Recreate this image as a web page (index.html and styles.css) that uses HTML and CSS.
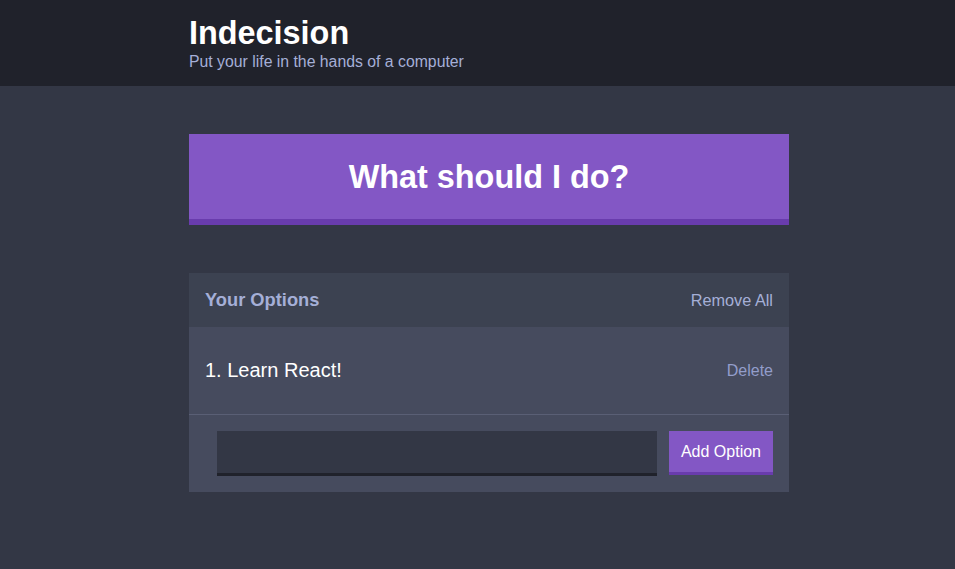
FILE: index.html
```html
<!DOCTYPE html>
<html lang="en">
<head>
<meta charset="utf-8">
<title>Indecision</title>
<link rel="stylesheet" href="styles.css">
</head>
<body>
<header class="header">
  <div class="container">
    <h1 class="header__title">Indecision</h1>
    <h2 class="header__subtitle">Put your life in the hands of a computer</h2>
  </div>
</header>
<main class="container main">
  <button class="big-button">What should I do?</button>
  <section class="widget">
    <div class="widget-header">
      <h3 class="widget-header__title">Your Options</h3>
      <button class="button--link">Remove All</button>
    </div>
    <div class="option">
      <p class="option__text">1. Learn React!</p>
      <button class="button--link option__delete">Delete</button>
    </div>
    <form class="add-option">
      <input class="add-option__input" type="text" name="option">
      <button class="button" type="button">Add Option</button>
    </form>
  </section>
</main>
</body>
</html>
```

FILE: styles.css
```css
* { box-sizing: border-box; }
html, body { margin: 0; padding: 0; }
body {
  background: #333745;
  font-family: "Liberation Sans", Arial, Helvetica, sans-serif;
  font-size: 16px;
  color: #ffffff;
  height: 569px;
  overflow: hidden;
}
button, input { font-family: inherit; }
.container {
  width: 600px;
  margin-left: 189px;
}
.header {
  background: #20222b;
  height: 86px;
  padding-top: 15px;
}
.header__title {
  margin: 0;
  font-size: 32.4px;
  line-height: 37px;
  font-weight: bold;
  color: #ffffff;
}
.header__subtitle {
  margin: 1px 0 0;
  font-size: 15.8px;
  line-height: 18px;
  font-weight: 500;
  color: #a5afd7;
}
.main { padding-top: 48px; }
.big-button {
  display: block;
  width: 100%;
  background: #8357c5;
  color: #ffffff;
  border: none;
  border-bottom: 6px solid #693cad;
  padding: 25px 0 23px;
  font-size: 32.4px;
  line-height: 37px;
  font-weight: bold;
  margin: 0 0 48px;
}
.widget { background: #464b5e; }
.widget-header {
  background: #3c4251;
  display: flex;
  justify-content: space-between;
  align-items: center;
  padding: 16px;
  height: 54px;
}
.widget-header__title {
  margin: 0;
  font-size: 18.3px;
  line-height: 22px;
  font-weight: bold;
  color: #a5afd7;
}
.button--link {
  background: none;
  border: none;
  padding: 0;
  color: #a5afd7;
  font-size: 16.3px;
  line-height: 18px;
}
.option__delete { color: #939dcb; font-size: 16px; }
.option {
  display: flex;
  justify-content: space-between;
  align-items: center;
  padding: 0 16px;
  height: 88px;
  border-bottom: 1px solid #5a5f75;
}
.option__text {
  margin: 0;
  font-size: 20px;
  line-height: 23px;
  color: #ffffff;
  font-weight: 500;
}
.add-option {
  display: flex;
  align-items: flex-start;
  padding: 16px 16px 16px 28px;
  margin: 0;
}
.add-option__input {
  flex: 1;
  height: 45px;
  background: #333745;
  border: none;
  border-bottom: 3px solid #20222b;
  color: #a5afd7;
  margin: 0 12px 0 0;
  padding: 0 12px;
  font-size: 16px;
}
.button {
  background: #8357c5;
  color: #ffffff;
  border: none;
  border-bottom: 3px solid #693cad;
  padding: 12px;
  height: 44px;
  font-size: 16px;
  line-height: 17px;
}
```
